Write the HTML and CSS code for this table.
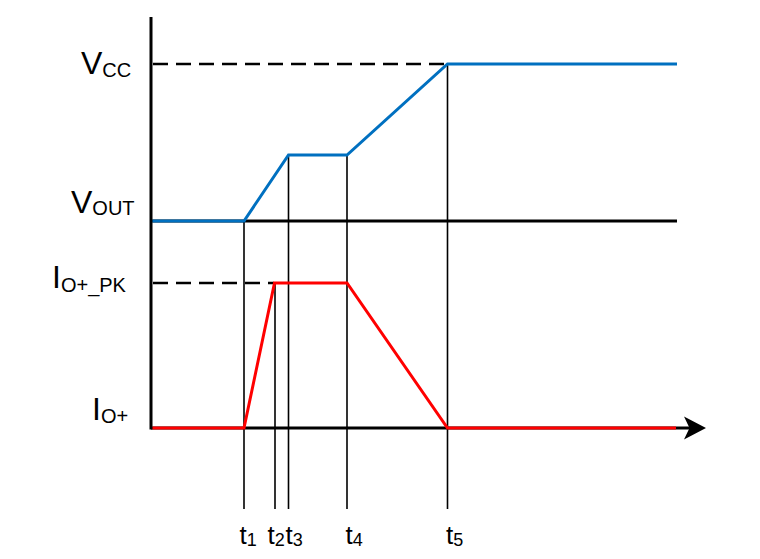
FILE: index.html
```html
<!DOCTYPE html>
<html>
<head>
<meta charset="utf-8">
<link rel="stylesheet" href="styles.css">
</head>
<body>
<svg class="chart" width="760" height="559" viewBox="0 0 760 559" xmlns="http://www.w3.org/2000/svg">
  <!-- axis -->
  <line class="axis" x1="151" y1="17" x2="151" y2="429.5"/>
  <line class="axis" x1="151" y1="221" x2="677" y2="221"/>
  <line class="axis" x1="151" y1="428" x2="690" y2="428"/>
  <polygon class="arrow" points="684,416.5 706,428 684,439.5 689.5,428"/>
  <!-- dashed -->
  <line class="dash" x1="153" y1="64" x2="447" y2="64"/>
  <line class="dash" x1="153" y1="283" x2="274" y2="283"/>
  <!-- time lines -->
  <line class="tick" x1="244" y1="221" x2="244" y2="509"/>
  <line class="tick" x1="275" y1="283" x2="275" y2="509"/>
  <line class="tick" x1="288.5" y1="155" x2="288.5" y2="509"/>
  <line class="tick" x1="347" y1="155" x2="347" y2="509"/>
  <line class="tick" x1="447.5" y1="64" x2="447.5" y2="509"/>
  <!-- signals -->
  <polyline class="vout" points="152.5,221 244,221 288.5,155 347,155 447.5,64 677,64"/>
  <polyline class="iout" points="152.5,428 244,428 274.5,283 347,283 447.5,428 676,428"/>
  <!-- labels -->
  <text class="lbl" x="81" y="74">V<tspan class="sub" dy="3">CC</tspan></text>
  <text class="lbl" x="71" y="213">V<tspan class="sub" dy="2">OUT</tspan></text>
  <text class="lbl" x="52" y="288">I<tspan class="sub" dy="3.5">O+_PK</tspan></text>
  <text class="lbl" x="92" y="420">I<tspan class="sub" dy="3">O+</tspan></text>
  <text class="tl" x="239.5" y="544">t<tspan class="tsub" dy="2">1</tspan></text>
  <text class="tl" x="267.5" y="544">t<tspan class="tsub" dy="2">2</tspan></text>
  <text class="tl" x="285.5" y="544">t<tspan class="tsub" dy="2">3</tspan></text>
  <text class="tl" x="345.5" y="544">t<tspan class="tsub" dy="2">4</tspan></text>
  <text class="tl" x="446" y="544">t<tspan class="tsub" dy="2">5</tspan></text>
</svg>
</body>
</html>
```
FILE: styles.css
```css
html, body {
  margin: 0;
  padding: 0;
  background: #ffffff;
}
.chart {
  display: block;
}
.axis {
  stroke: #000000;
  stroke-width: 3;
}
.arrow {
  fill: #000000;
}
.dash {
  stroke: #000000;
  stroke-width: 2.5;
  stroke-dasharray: 15 8;
}
.tick {
  stroke: #000000;
  stroke-width: 1.6;
}
.vout {
  fill: none;
  stroke: #0070c0;
  stroke-width: 3;
  stroke-linejoin: miter;
}
.iout {
  fill: none;
  stroke: #ff0000;
  stroke-width: 3;
  stroke-linejoin: miter;
}
.lbl {
  font-family: "Liberation Sans", Arial, sans-serif;
  font-size: 32px;
  fill: #000000;
}
.sub {
  font-size: 20px;
}
.tl {
  font-family: "Liberation Sans", Arial, sans-serif;
  font-size: 26px;
  fill: #000000;
}
.tsub {
  font-size: 18px;
}
```
